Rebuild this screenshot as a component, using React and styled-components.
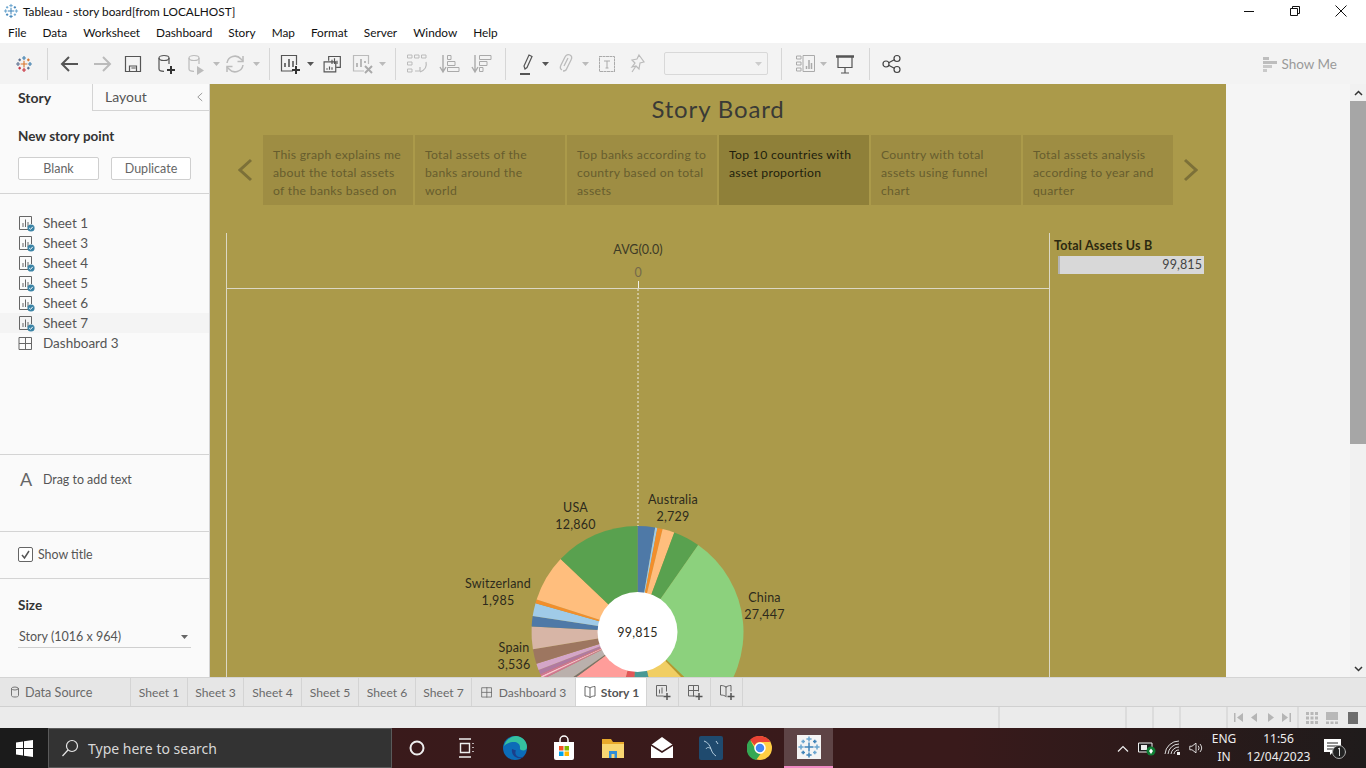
import styled, { createGlobalStyle } from "styled-components";

const GlobalStyle = createGlobalStyle`
  html, body { margin: 0; padding: 0; height: 100%; overflow: hidden; background: #fff; }
  * { box-sizing: border-box; }
`;

const uiFont = `"Noto Sans", "Open Sans", sans-serif`;
const bookFont = `Lato, "Noto Sans", sans-serif`;

const Page = styled.div`
  width: 1366px;
  height: 768px;
  display: flex;
  flex-direction: column;
  overflow: hidden;
  font-family: ${uiFont};
`;

/* title bar + menu */
const TitleBar = styled.div`
  height: 22px;
  display: flex;
  align-items: center;
  padding-left: 3px;
  gap: 4px;
  background: #fff;
  font-family: ${bookFont};
  font-size: 11.8px;
  color: #111;
`;
const WindowControls = styled.div`
  margin-left: auto;
  margin-right: 2px;
  display: flex;
  height: 22px;
`;
const WindowButton = styled.div`
  width: 46px;
  display: flex;
  align-items: center;
  justify-content: center;
`;
const MenuBar = styled.div`
  height: 21px;
  display: flex;
  align-items: center;
  gap: 16px;
  padding-left: 8px;
  background: #fff;
  font-family: ${bookFont};
  font-size: 11.8px;
  color: #111;
`;

/* toolbar */
const Toolbar = styled.div`
  height: 41px;
  display: flex;
  align-items: center;
  background: #f3f3f3;
`;
const Tool = styled.div`
  flex: none;
  width: ${(p) => p.$w || 24}px;
  margin-left: ${(p) => p.$gap || 0}px;
  display: flex;
  align-items: center;
  justify-content: center;
`;
const ToolSep = styled.div`
  flex: none;
  width: 1px;
  height: 32px;
  margin-left: ${(p) => p.$gap || 0}px;
  background: #d6d6d6;
`;
const ToolSelect = styled.div`
  flex: none;
  width: 104px;
  height: 23px;
  margin-left: ${(p) => p.$gap}px;
  border: 1px solid #d8d8d8;
  border-radius: 2px;
  display: flex;
  align-items: center;
  justify-content: flex-end;
  padding-right: 5px;
`;
const ShowMe = styled.div`
  margin-left: auto;
  margin-right: 29px;
  display: flex;
  align-items: center;
  gap: 2px;
  font-family: ${bookFont};
  font-size: 13.5px;
  color: #9a9a9a;
`;

/* main */
const Main = styled.div`
  height: 593px;
  display: flex;
`;
const Sidebar = styled.aside`
  width: 210px;
  flex: none;
  background: #fafafa;
  border-right: 1px solid #d4d4d4;
  display: flex;
  flex-direction: column;
  font-family: ${bookFont};
  font-size: 13px;
  color: #555;
`;
const SideTabs = styled.div`
  height: 27px;
  display: flex;
  font-size: 14px;
`;
const SideTab = styled.div`
  width: ${(p) => (p.$active ? "92px" : "117px")};
  padding: 0 6px 1px ${(p) => (p.$active ? "18px" : "12px")};
  display: flex;
  align-items: center;
  justify-content: space-between;
  font-weight: ${(p) => (p.$active ? 700 : 400)};
  color: ${(p) => (p.$active ? "#333" : "#555")};
  ${(p) =>
    !p.$active &&
    `border-left: 1px solid #d4d4d4; border-bottom: 1px solid #d4d4d4;`}
`;
const SideSection = styled.section`
  height: ${(p) => p.$h}px;
  flex: none;
  padding: ${(p) => p.$pad || "0 18px"};
  border-bottom: ${(p) => (p.$noline ? "none" : "1px solid #d4d4d4")};
`;
const SideHeading = styled.div`
  font-weight: 700;
  font-size: 13.5px;
  line-height: 18px;
  color: #333;
`;
const StoryButtons = styled.div`
  display: flex;
  justify-content: space-between;
  margin-top: 12px;
`;
const StoryButton = styled.div`
  width: ${(p) => p.$w}px;
  height: 23px;
  background: #fff;
  border: 1px solid #cfcfcf;
  border-radius: 2px;
  display: flex;
  align-items: center;
  justify-content: center;
  font-size: 12.5px;
  color: #666;
`;
const SheetList = styled.div`
  padding-top: 19px;
  flex: none;
  height: 261px;
  border-bottom: 1px solid #d4d4d4;
`;
const SheetRow = styled.div`
  height: 20px;
  display: flex;
  align-items: center;
  gap: 7px;
  padding-left: 18px;
  font-size: 13.5px;
  background: ${(p) => (p.$hover ? "#f4f4f4" : "transparent")};
`;
const DragHint = styled.div`
  display: flex;
  align-items: center;
  padding-left: 20px;
  height: 48px;
  font-size: 12.4px;
`;
const BigA = styled.span`
  width: 23px;
  font-size: 18px;
  color: #666;
`;
const TitleCheck = styled.label`
  height: 45px;
  display: flex;
  align-items: center;
  gap: 5px;
  font-size: 12.4px;
`;
const CheckBox = styled.span`
  width: 15px;
  height: 15px;
  border: 1px solid #666;
  border-radius: 2px;
  background: #fff;
  display: flex;
  align-items: center;
  justify-content: center;
`;
const SizeSelect = styled.div`
  margin-top: 12px;
  height: 22px;
  display: flex;
  align-items: center;
  justify-content: space-between;
  padding: 0 3px 0 1px;
  border-bottom: 1px solid #cfcfcf;
  font-size: 12.5px;
`;

/* story canvas */
const Canvas = styled.main`
  width: 1016px;
  flex: none;
  overflow: hidden;
  background: #ab9a4a;
  font-family: ${bookFont};
`;
const StoryTitle = styled.h1`
  margin: 0;
  height: 51px;
  line-height: 49px;
  text-align: center;
  font-size: 24px;
  font-weight: 400;
  letter-spacing: 0.85px;
  color: #3a3a36;
`;
const Navigator = styled.nav`
  height: 70px;
  margin-bottom: 28px;
  display: flex;
  gap: 2px;
`;
const NavArrow = styled.div`
  flex: 1;
  display: flex;
  align-items: center;
  justify-content: ${(p) => (p.$right ? "flex-start" : "flex-end")};
  padding: 0 8px;
`;
const StoryPoint = styled.div`
  width: 150px;
  flex: none;
  padding: 11px 9px 0 10px;
  font-size: 12.2px;
  line-height: 18px;
  letter-spacing: 0.3px;
  overflow: hidden;
  background: ${(p) => (p.$active ? "#8f8039" : "#9e8d43")};
  color: ${(p) => (p.$active ? "#211e0d" : "#675d2e")};
`;
const Viz = styled.div`
  display: flex;
  align-items: flex-start;
  padding-left: 16px;
`;
const ChartPane = styled.div`
  width: 824px;
  height: 444px;
  flex: none;
  border-left: 1px solid #dcd8c4;
  border-right: 1px solid #dcd8c4;
  overflow: hidden;
`;
const AxisHead = styled.div`
  height: 56px;
  border-bottom: 1px solid #dcd8c4;
  display: flex;
  flex-direction: column;
  align-items: center;
  padding-top: 9px;
  font-size: 12.5px;
  line-height: 15px;
  color: #3d3a26;
`;
const AxisValue = styled.div`
  margin-top: 8px;
  height: 16px;
  color: #74694a;
`;
const AxisTick = styled.div`
  width: 1px;
  height: 7px;
  background: #f2f0e6;
`;
const ChartSvg = styled.svg`
  display: block;
  text {
    font-family: ${bookFont};
    font-size: 12.5px;
    fill: #2d2a1c;
    text-anchor: middle;
    letter-spacing: 0.2px;
  }
`;
const LegendBox = styled.div`
  padding: 5px 0 0 4px;
  width: 170px;
`;
const LegendTitle = styled.div`
  font-size: 12.5px;
  font-weight: 700;
  letter-spacing: 0.2px;
  line-height: 16px;
  color: #2b2810;
`;
const LegendBar = styled.div`
  margin: 2px 0 0 4px;
  width: 146px;
  height: 18px;
  background: #d8d8d8;
  border-left: 2px solid #b4b4b4;
  text-align: right;
  padding-right: 2px;
  font-size: 12.5px;
  line-height: 18px;
  letter-spacing: 0.1px;
  color: #444;
`;

const Gutter = styled.div`
  flex: 1;
  background: #f5f5f5;
`;
const Scrollbar = styled.div`
  width: 16px;
  flex: none;
  background: #f1f1f1;
  display: flex;
  flex-direction: column;
  align-items: center;
`;
const ScrollArrow = styled.div`
  height: 17px;
  flex: none;
  display: flex;
  align-items: center;
`;
const ScrollThumb = styled.div`
  width: 16px;
  height: 343px;
  flex: none;
  margin-bottom: auto;
  background: #a6a6a6;
`;

/* sheet tabs and status */
const TabBar = styled.div`
  height: 30px;
  display: flex;
  background: #e6e6e6;
  border-top: 1px solid #d4d4d4;
  border-bottom: 1px solid #d0d0d0;
  font-family: ${bookFont};
  font-size: 12.1px;
  color: #6a6a6a;
`;
const SheetTab = styled.div`
  width: ${(p) => p.$w}px;
  flex: none;
  display: flex;
  align-items: center;
  justify-content: ${(p) => (p.$start ? "flex-start" : "center")};
  padding-left: ${(p) => (p.$start ? "9px" : 0)};
  gap: 4px;
  border-right: 1px solid #d4d4d4;
  background: ${(p) => (p.$active ? "#fff" : "transparent")};
  font-weight: ${(p) => (p.$active ? 700 : 400)};
  font-size: ${(p) => (p.$start ? "12.6px" : "inherit")};
  color: ${(p) => (p.$active ? "#555" : "#6a6a6a")};
`;
const StatusBar = styled.div`
  height: 21px;
  display: flex;
  background: #ebebeb;
`;
const StatusCell = styled.div`
  width: ${(p) => p.$w}px;
  flex: none;
  display: flex;
  align-items: center;
  justify-content: space-around;
  padding: 0 3px;
  border-right: ${(p) => (p.$last ? "none" : "2px solid #dcdcdc")};
`;

/* windows taskbar */
const Taskbar = styled.div`
  height: 40px;
  flex: none;
  display: flex;
  align-items: center;
  background: linear-gradient(90deg, #3a1a1b 0%, #391a1b 70%, #2c1a1a 85%, #1f1b1b 100%);
  color: #eee;
`;
const StartButton = styled.div`
  width: 48px;
  height: 40px;
  flex: none;
  background: #1b1b1b;
  display: flex;
  align-items: center;
  justify-content: center;
`;
const SearchBox = styled.div`
  width: 344px;
  height: 40px;
  flex: none;
  background: #333;
  border: 1px solid #5a5a5a;
  display: flex;
  align-items: center;
  gap: 9px;
  padding-left: 12px;
  font-size: 14px;
  color: #d8d8d8;
`;
const TaskSlot = styled.div`
  width: 49px;
  height: 40px;
  flex: none;
  display: flex;
  align-items: center;
  justify-content: center;
  background: ${(p) => (p.$active ? "#5e4446" : "transparent")};
  border-bottom: ${(p) => (p.$active ? "2px solid #f08ac4" : "none")};
`;
const AppTile = styled.div`
  width: 24px;
  height: 24px;
  background: #f4f4f4;
  display: flex;
`;
const Tray = styled.div`
  margin-left: auto;
  display: flex;
  align-items: center;
  height: 40px;
`;
const TrayIcon = styled.div`
  width: ${(p) => p.$w}px;
  flex: none;
  display: flex;
  align-items: center;
  justify-content: center;
`;
const TrayText = styled.div`
  width: ${(p) => p.$w}px;
  flex: none;
  text-align: center;
  font-size: 12px;
  line-height: 18px;
  color: #eee;
`;

/* icons */
const Svg = ({ size = 24, w, h, box, children, ...rest }) => (
  <svg
    width={w || size}
    height={h || size}
    viewBox={box || "0 0 24 24"}
    fill="none"
    strokeLinecap="square"
    {...rest}
  >
    {children}
  </svg>
);

const TableauMark = ({ size = 20, colors }) => {
  const [a, b, c, d] = colors;
  const crosses = [
    [12, 12, 4.5, a], [12, 4, 2.6, b], [12, 20, 2.6, c], [4, 12, 2.6, d], [20, 12, 2.6, b],
    [6.2, 6.5, 1.8, d], [17.8, 6.5, 1.8, a], [6.2, 17.5, 1.8, c], [17.8, 17.5, 1.8, d],
  ];
  return (
    <Svg size={size}>
      {crosses.map(([x, y, s, col], i) => (
        <path key={i} d={`M${x - s} ${y}H${x + s}M${x} ${y - s}V${y + s}`} stroke={col} strokeWidth="1.5" strokeLinecap="butt" />
      ))}
    </Svg>
  );
};

const Caret = ({ color = "#777", w = 7 }) => (
  <svg width={w} height="4" viewBox="0 0 7 4"><path d="M0 0h7L3.500 4z" fill={color} /></svg>
);

const BackIcon = ({ color }) => (
  <Svg><path d="M20 12H4M11 5l-7 7 7 7" stroke={color} strokeWidth="2" strokeLinecap="butt" /></Svg>
);
const ForwardIcon = ({ color }) => (
  <Svg><path d="M4 12h16M13 5l7 7-7 7" stroke={color} strokeWidth="2" strokeLinecap="butt" /></Svg>
);
const SaveIcon = () => (
  <Svg><path d="M4.500 4.500h15v15h-15zM8.500 19v-5h7v5M11 16h3" stroke="#555" strokeWidth="1.200" /></Svg>
);
const DataIcon = ({ color = "#555", plus, play }) => (
  <Svg>
    <ellipse cx="10" cy="6" rx="5" ry="2.500" stroke={color} strokeWidth="1.200" />
    <path d="M5 6v11c0 1.300 2 2.300 5 2.300M15 6v6" stroke={color} strokeWidth="1.200" strokeLinecap="butt" />
    {plus && <path d="M17 14v8M13 18h8" stroke="#333" strokeWidth="2" strokeLinecap="butt" />}
    {play && <path d="M13 14l7 4.500-7 4.500z" fill={color} />}
  </Svg>
);
const RefreshIcon = () => (
  <Svg>
    <path d="M4 11a8 8 0 0 1 14-4l2 2M20 13a8 8 0 0 1-14 4l-2-2" stroke="#bbb" strokeWidth="1.500" strokeLinecap="butt" />
    <path d="M20 4v5.500h-5.500M4 20v-5.500h5.500" stroke="#bbb" strokeWidth="1.500" strokeLinecap="butt" />
  </Svg>
);
const SheetAddIcon = () => (
  <Svg>
    <path d="M15 19H3.500V3.500h15V13" stroke="#555" strokeWidth="1.200" strokeLinecap="butt" />
    <path d="M7 15v-4M11 15V7M15 15v-6" stroke="#555" strokeWidth="1.600" strokeLinecap="butt" />
    <path d="M18 14v8M14 18h8" stroke="#333" strokeWidth="2" strokeLinecap="butt" />
  </Svg>
);
const DuplicateIcon = () => (
  <Svg size={20}>
    <path d="M8 8V3h14v13h-5" stroke="#555" strokeWidth="1.400" strokeLinecap="butt" />
    <path d="M2.500 9.500h14v12h-14z" stroke="#555" strokeWidth="1.400" fill="#f3f3f3" />
    <path d="M12 12V7M15 12V5M18 12V8M6 19v-2M9 19v-4M12 19v-3" stroke="#555" strokeWidth="1.400" strokeLinecap="butt" />
  </Svg>
);
const ClearIcon = () => (
  <Svg>
    <path d="M14 19H3.500V3.500h15V12" stroke="#bbb" strokeWidth="1.200" strokeLinecap="butt" />
    <path d="M7 15v-4M11 15V7M15 11V9" stroke="#aaa" strokeWidth="1.600" strokeLinecap="butt" />
    <path d="M15 14l7 7M22 14l-7 7" stroke="#aaa" strokeWidth="2" strokeLinecap="butt" />
  </Svg>
);
const SwapIcon = () => (
  <Svg>
    <path d="M3 3h4v3H3zM10 3h4v3h-4zM17 3h4v3h-4zM3 10h4v3H3zM3 17h4v3H3z" stroke="#bbb" strokeWidth="1" />
    <path d="M21 10c1 4-1 8-6 10M10 19h5v-4" stroke="#bbb" strokeWidth="1.200" strokeLinecap="butt" />
  </Svg>
);
const SortIcon = ({ desc }) => (
  <Svg>
    <path d="M5 3v16M2 15l3 5 3-5" stroke="#aaa" strokeWidth="1.400" strokeLinecap="butt" />
    {(desc
      ? ["M10 3.500h11v4H10z", "M10 9.500h7v4h-7z", "M10 15.500h3v4h-3z"]
      : ["M10 3.500h3v4h-3z", "M10 9.500h7v4h-7z", "M10 15.500h11v4H10z"]
    ).map((d) => (
      <path key={d} d={d} stroke="#aaa" strokeWidth="1" />
    ))}
  </Svg>
);
const HighlightIcon = () => (
  <Svg>
    <path d="M9 17l-1-3L13 3l3 1.500-5 11z" stroke="#555" strokeWidth="1.200" strokeLinecap="butt" />
    <path d="M4 22h10" stroke="#555" strokeWidth="2" strokeLinecap="butt" />
  </Svg>
);
const AttachIcon = () => (
  <Svg>
    <path d="M8 18c-2-1-2-3-1-5l4-8c1-2 3-3 5-2s2 3 1 5l-5 10c-1 1-2 1-3 1M10 14l4-8" stroke="#bbb" strokeWidth="1.300" strokeLinecap="butt" />
  </Svg>
);
const TextBoxIcon = () => (
  <Svg>
    <path d="M4.500 4.500h15v15h-15z" stroke="#aaa" strokeWidth="1" strokeDasharray="2 1.500" />
    <path d="M9 9h6M12 9v7M10.500 16h3" stroke="#aaa" strokeWidth="1" strokeLinecap="butt" />
  </Svg>
);
const PinIcon = () => (
  <Svg>
    <path d="M14 3l5 7-4 1-1 6-3-3-4 1 3-4-3-3 5-1z M7 20l4-6" stroke="#bbb" strokeWidth="1.200" strokeLinecap="butt" />
  </Svg>
);
const LabelsIcon = () => (
  <Svg>
    <path d="M3 4h4v3H3zM3 10h4v3H3zM3 16h4v3H3zM9.500 3.500h11v16h-11z" stroke="#aaa" strokeWidth="1" />
    <path d="M12.500 17v-3M15 17V8M17.500 17v-6" stroke="#aaa" strokeWidth="1.500" strokeLinecap="butt" />
  </Svg>
);
const PresentIcon = () => (
  <Svg>
    <path d="M3 4.500h18" stroke="#555" strokeWidth="2.500" strokeLinecap="butt" />
    <path d="M5 5v10.500h14V5M12 16v5M8 21h8" stroke="#555" strokeWidth="1.200" strokeLinecap="butt" />
  </Svg>
);
const ShareIcon = () => (
  <Svg>
    <circle cx="6" cy="12" r="3" stroke="#444" strokeWidth="1.200" />
    <circle cx="17" cy="6.500" r="3" stroke="#444" strokeWidth="1.200" />
    <circle cx="17" cy="17.500" r="3" stroke="#444" strokeWidth="1.200" />
    <path d="M8.700 10.700l5.600-2.900M8.700 13.300l5.600 2.900" stroke="#444" strokeWidth="1.200" strokeLinecap="butt" />
  </Svg>
);
const ShowMeIcon = () => (
  <Svg size={18} box="0 0 18 18">
    <path d="M2 2h6v3H2z" fill="#bdbdbd" />
    <path d="M2 6h14v3H2z" fill="#bdbdbd" />
    <path d="M2 10h9v3H2zM2 14h4v3H2z" fill="#c9c9c9" />
  </Svg>
);
const Chevron = ({ right, w = 15, h = 24, color = "#7c7038", sw = 3 }) => (
  <svg width={w} height={h} viewBox="0 0 15 24" fill="none">
    <path d={right ? "M2 2l11 10L2 22" : "M13 2L2 12l11 10"} stroke={color} strokeWidth={sw} />
  </svg>
);

const SheetIcon = () => (
  <Svg size={18} box="0 -1 18 18">
    <path d="M11 14.500H1.500V1.500h12V9" stroke="#666" strokeWidth="1" strokeLinecap="butt" />
    <path d="M5 12V8M7.500 12V4.500M10 12V7" stroke="#666" strokeWidth="1" strokeLinecap="butt" />
    <circle cx="13" cy="13" r="3.600" fill="#3b83a5" />
    <path d="M11.200 13l1.300 1.300 2.300-2.500" stroke="#fff" strokeWidth="1" strokeLinecap="butt" />
  </Svg>
);
const GridIcon = ({ size = 18 }) => (
  <Svg size={size} box="0 -1 18 18">
    <path d="M1.500 2.500h12v12h-12zM7.500 2.500v12M1.500 8.500h12" stroke="#666" strokeWidth="1" />
  </Svg>
);
const BookIcon = () => (
  <Svg size={14} box="0 0 14 14">
    <path d="M7 3c-1.500-1-3-1.500-5-1.500v9.500c2 0 3.500.5 5 1.500 1.500-1 3-1.500 5-1.500V1.500C10 1.500 8.500 2 7 3zM7 3v9.500" stroke="#666" strokeWidth="1" strokeLinecap="butt" />
  </Svg>
);
const PlusBadge = ({ children }) => (
  <Svg size={18} box="0 0 18 18">
    {children}
    <path d="M13 10v7M9.500 13.500h7" stroke="#555" strokeWidth="1.500" strokeLinecap="butt" />
  </Svg>
);

/* donut */
const SLICES = [
  [0, 9.6, "#4e79a7"], [9.6, 10.8, "#a0cbe8"], [10.8, 13.7, "#f28e2b"], [13.7, 20.3, "#ffbe7d"],
  [20.3, 34.9, "#59a14f"], [34.9, 134, "#8cd17d"], [134, 136, "#b6992d"], [136, 166.4, "#f1ce63"],
  [166.4, 184, "#499894"], [184, 194.5, "#e15759"], [194.5, 233.6, "#ff9d9a"], [233.6, 235, "#79706e"],
  [235, 243.5, "#bab0ac"], [243.5, 244.5, "#d37295"], [244.5, 245.5, "#fabfd2"], [245.5, 246.5, "#d37295"],
  [246.500, 249, "#b07aa1"], [249, 252.5, "#d4a6c8"], [252.5, 260.6, "#9d7660"], [260.6, 273, "#d7b5a6"],
  [273, 278.7, "#4e79a7"], [278.7, 285.8, "#a0cbe8"], [285.8, 287.9, "#f28e2b"], [287.9, 313.5, "#ffbe7d"],
  [313.5, 360, "#59a14f"],
];
const CX = 637.5;
const CY = 632;
const R = 106;

const polar = (deg, r) => {
  const a = (deg * Math.PI) / 180;
  return [CX + r * Math.sin(a), CY - r * Math.cos(a)];
};
const wedge = (from, to) => {
  const [x1, y1] = polar(from, R);
  const [x2, y2] = polar(to, R);
  return `M${CX} ${CY}L${x1} ${y1}A${R} ${R} 0 ${to - from > 180 ? 1 : 0} 1 ${x2} ${y2}Z`;
};

const LABELS = [
  ["Australia", "2,729", 673, 499],
  ["USA", "12,860", 575.5, 507],
  ["China", "27,447", 764.5, 597],
  ["Switzerland", "1,985", 498, 583],
  ["Spain", "3,536", 514, 647],
];

const Donut = () => (
  <ChartSvg width="822" height="388" viewBox="227 289 822 388">
    <path d={`M638 289V${CY - R}`} stroke="#efece0" strokeWidth="1" strokeDasharray="2 2" />
    {SLICES.map(([from, to, color]) => (
      <path key={from} d={wedge(from, to)} fill={color} />
    ))}
    <circle cx={CX} cy={CY} r="40" fill="#fff" />
    <text x={CX} y={CY + 5}>99,815</text>
    {LABELS.map(([name, value, x, y]) => (
      <g key={name}>
        <text x={x} y={y + 5}>{name}</text>
        <text x={x} y={y + 22}>{value}</text>
      </g>
    ))}
  </ChartSvg>
);

/* taskbar pictures */
const WinLogo = () => (
  <Svg size={17} box="0 0 17 17">
    <path d="M0 2.400L7 1.400V8H0zM8 1.300L17 0v8H8zM0 9h7v6.600L0 14.600zM8 9h9v8l-9-1.300z" fill="#fff" />
  </Svg>
);
const EdgeLogo = () => (
  <Svg size={26} box="0 0 26 26">
    <circle cx="13" cy="13" r="12" fill="#0c6cb8" />
    <path d="M2 11C4 4 10 1 14 1c6 0 11 5 11 11 0 3-3 4-6 3-1.500-.5-1-2-1-3 0-3-3-5-6-5-5 0-8 2-10 4z" fill="#35c1a0" />
    <path d="M10 14c-1 5 3 10 9 9 1 0 2-.5 3-1.500-7 3-10-3-8-6z" fill="#1b3f8b" />
  </Svg>
);
const StoreLogo = () => (
  <Svg size={26} box="0 0 26 26">
    <path d="M9 7V5a4 4 0 0 1 8 0v2" stroke="#fff" strokeWidth="1.500" />
    <path d="M3 7h20v16a2 2 0 0 1-2 2H5a2 2 0 0 1-2-2z" fill="#fff" />
    <path d="M8 11h4.500v4.500H8z" fill="#f25022" />
    <path d="M13.500 11H18v4.500h-4.500z" fill="#7fba00" />
    <path d="M8 16.500h4.500V21H8z" fill="#00a4ef" />
    <path d="M13.500 16.500H18V21h-4.500z" fill="#ffb900" />
  </Svg>
);
const FolderLogo = () => (
  <Svg size={26} box="0 0 26 26">
    <path d="M2 4h9l2 3h11v16H2z" fill="#e8a92b" />
    <path d="M2 9h22v14H2z" fill="#f8d671" />
    <path d="M9 16h8v7H9z" fill="#2f8dd8" />
    <path d="M11.500 19h3v4h-3z" fill="#f8d671" />
  </Svg>
);
const MailLogo = () => (
  <Svg size={26} box="0 0 26 26">
    <path d="M2 10l11-8 11 8v13H2z" fill="#fff" />
    <path d="M2 10l11 7 11-7" stroke="#3a1a1b" strokeWidth="1.500" />
  </Svg>
);
const MysqlLogo = () => (
  <Svg size={26} box="0 0 26 26">
    <rect x="1" y="1" width="24" height="24" rx="2" fill="#1f4a6e" />
    <path d="M6 6c4 1 6 5 7 8s2 5 5 7M8 14c1-2 3-2 5 0M18 6l2 3" stroke="#b7cfe0" strokeWidth="1" fill="none" strokeLinecap="butt" />
  </Svg>
);
const ChromeLogo = () => (
  <Svg size={26} box="0 0 26 26">
    <circle cx="13" cy="13" r="12" fill="#ffce44" />
    <path d="M13 1a12 12 0 0 1 10.400 6H13a6 6 0 0 0-5.400 3.400L3 4.800A12 12 0 0 1 13 1z" fill="#ea4335" />
    <path d="M3 4.800l5 8.600a6 6 0 0 0 5.500 5.600L9 25a12 12 0 0 1-6-20.200z" fill="#34a853" />
    <circle cx="13" cy="13" r="5" fill="#4285f4" stroke="#fff" strokeWidth="1.500" />
  </Svg>
);
const TaskViewIcon = () => (
  <Svg size={20} box="0 0 20 20">
    <path d="M3 1h12M3 19h12M4.500 5.500h9v9h-9zM17 5v1M17 9v1M17 13v1" stroke="#eee" strokeWidth="1.400" strokeLinecap="butt" />
  </Svg>
);

const Pager = ({ d }) => (
  <svg width="9" height="9" viewBox="0 0 9 9"><path d={d} fill="#b5b5b5" /></svg>
);

const TABS = ["Sheet 1", "Sheet 3", "Sheet 4", "Sheet 5", "Sheet 6", "Sheet 7"];
const TAB_W = [57, 56, 58, 57, 57, 56];
const POINTS = [
  "This graph explains me about the total assets of the banks based on",
  "Total assets of the banks around the world",
  "Top banks according to country based on total assets",
  "Top 10 countries with asset proportion",
  "Country with total assets using funnel chart",
  "Total assets analysis according to year and quarter",
];
const MENU = ["File", "Data", "Worksheet", "Dashboard", "Story", "Map", "Format", "Server", "Window", "Help"];

export default function App() {
  return (
    <Page>
      <GlobalStyle />
      <TitleBar>
        <TableauMark size={16} colors={["#3f83b8", "#6aa5cf", "#3f83b8", "#6aa5cf"]} />
        Tableau - story board[from LOCALHOST]
        <WindowControls>
          <WindowButton>
            <svg width="10" height="10"><path d="M0 5.500h10" stroke="#111" /></svg>
          </WindowButton>
          <WindowButton>
            <svg width="10" height="10" fill="none"><path d="M.5 2.500h7v7h-7zM2.500 2.500v-2h7v7h-2" stroke="#111" /></svg>
          </WindowButton>
          <WindowButton>
            <svg width="12" height="12"><path d="M.5.5l11 11M11.500.5l-11 11" stroke="#111" /></svg>
          </WindowButton>
        </WindowControls>
      </TitleBar>
      <MenuBar>
        {MENU.map((m) => (
          <span key={m}>{m}</span>
        ))}
      </MenuBar>

      <Toolbar>
        <Tool $w={47}><TableauMark size={18} colors={["#d9762c", "#3f7fae", "#c8323f", "#5b6f8f"]} /></Tool>
        <ToolSep />
        <Tool $gap={10}><BackIcon color="#555" /></Tool>
        <Tool $gap={8}><ForwardIcon color="#bbb" /></Tool>
        <Tool $gap={7}><SaveIcon /></Tool>
        <Tool $gap={9}><DataIcon plus /></Tool>
        <Tool $gap={6}><DataIcon color="#bbb" play /></Tool>
        <Tool $gap={3} $w={10}><Caret color="#bbb" /></Tool>
        <Tool $gap={2}><RefreshIcon /></Tool>
        <Tool $gap={4} $w={10}><Caret color="#bbb" /></Tool>
        <ToolSep $gap={8} />
        <Tool $gap={8}><SheetAddIcon /></Tool>
        <Tool $gap={3} $w={10}><Caret color="#555" /></Tool>
        <Tool $gap={5}><DuplicateIcon /></Tool>
        <Tool $gap={6}><ClearIcon /></Tool>
        <Tool $gap={3} $w={10}><Caret color="#bbb" /></Tool>
        <ToolSep $gap={8} />
        <Tool $gap={9}><SwapIcon /></Tool>
        <Tool $gap={9}><SortIcon /></Tool>
        <Tool $gap={8}><SortIcon desc /></Tool>
        <ToolSep $gap={11} />
        <Tool $gap={10}><HighlightIcon /></Tool>
        <Tool $w={10}><Caret color="#555" /></Tool>
        <Tool $gap={4}><AttachIcon /></Tool>
        <Tool $gap={2} $w={10}><Caret color="#bbb" /></Tool>
        <Tool $gap={5}><TextBoxIcon /></Tool>
        <Tool $gap={6}><PinIcon /></Tool>
        <ToolSelect $gap={15}><Caret color="#ccc" /></ToolSelect>
        <ToolSep $gap={13} />
        <Tool $gap={12}><LabelsIcon /></Tool>
        <Tool $w={10}><Caret color="#bbb" /></Tool>
        <Tool $gap={5}><PresentIcon /></Tool>
        <ToolSep $gap={12} />
        <Tool $gap={10}><ShareIcon /></Tool>
        <ShowMe><ShowMeIcon />Show Me</ShowMe>
      </Toolbar>

      <Main>
        <Sidebar>
          <SideTabs>
            <SideTab $active>Story</SideTab>
            <SideTab>
              Layout
              <Chevron w={6} h={10} color="#666" sw={1.6} />
            </SideTab>
          </SideTabs>
          <SideSection $h={83} $pad="16px 18px 0">
            <SideHeading>New story point</SideHeading>
            <StoryButtons>
              <StoryButton $w={81}>Blank</StoryButton>
              <StoryButton $w={80}>Duplicate</StoryButton>
            </StoryButtons>
          </SideSection>
          <SheetList>
            {TABS.map((s) => (
              <SheetRow key={s} $hover={s === "Sheet 7"}><SheetIcon />{s}</SheetRow>
            ))}
            <SheetRow><GridIcon />Dashboard 3</SheetRow>
          </SheetList>
          <SideSection $h={77} $pad="0">
            <DragHint><BigA>A</BigA>Drag to add text</DragHint>
          </SideSection>
          <SideSection $h={47}>
            <TitleCheck>
              <CheckBox>
                <svg width="11" height="11" fill="none"><path d="M2 6l2.500 3L9 2" stroke="#555" strokeWidth="1.500" /></svg>
              </CheckBox>
              Show title
            </TitleCheck>
          </SideSection>
          <SideSection $h={98} $pad="17px 18px 0" $noline>
            <SideHeading>Size</SideHeading>
            <SizeSelect>
              Story (1016 x 964)
              <Caret color="#666" />
            </SizeSelect>
          </SideSection>
        </Sidebar>

        <Canvas>
          <StoryTitle>Story Board</StoryTitle>
          <Navigator>
            <NavArrow><Chevron /></NavArrow>
            {POINTS.map((p, i) => (
              <StoryPoint key={p} $active={i === 3}>{p}</StoryPoint>
            ))}
            <NavArrow $right><Chevron right /></NavArrow>
          </Navigator>
          <Viz>
            <ChartPane>
              <AxisHead>
                AVG(0.0)
                <AxisValue>0</AxisValue>
                <AxisTick />
              </AxisHead>
              <Donut />
            </ChartPane>
            <LegendBox>
              <LegendTitle>Total Assets Us B</LegendTitle>
              <LegendBar>99,815</LegendBar>
            </LegendBox>
          </Viz>
        </Canvas>

        <Gutter />
        <Scrollbar>
          <ScrollArrow>
            <svg width="9" height="6" fill="none"><path d="M1 5l3.500-3.500L8 5" stroke="#333" strokeWidth="1.500" /></svg>
          </ScrollArrow>
          <ScrollThumb />
          <ScrollArrow>
            <svg width="9" height="6" fill="none"><path d="M1 1l3.500 3.500L8 1" stroke="#333" strokeWidth="1.500" /></svg>
          </ScrollArrow>
        </Scrollbar>
      </Main>

      <TabBar>
        <SheetTab $w={131} $start>
          <Svg size={12} box="0 0 12 12">
            <ellipse cx="6" cy="2.500" rx="3.500" ry="1.500" stroke="#777" />
            <path d="M2.500 2.500v7c0 1 1.500 1.500 3.500 1.500s3.500-.5 3.500-1.500v-7" stroke="#777" />
          </Svg>
          Data Source
        </SheetTab>
        {TABS.map((t, i) => (
          <SheetTab key={t} $w={TAB_W[i]}>{t}</SheetTab>
        ))}
        <SheetTab $w={104}><GridIcon size={14} />Dashboard 3</SheetTab>
        <SheetTab $w={71} $active><BookIcon />Story 1</SheetTab>
        <SheetTab $w={32}>
          <PlusBadge>
            <path d="M9 13H2.500V2.500h10V8" stroke="#666" />
            <path d="M5.500 10V7M8 10V5" stroke="#666" />
          </PlusBadge>
        </SheetTab>
        <SheetTab $w={32}>
          <PlusBadge>
            <path d="M9 13H2.500V2.500h10V8M7.500 2.500V13M2.500 7.500h10" stroke="#666" />
          </PlusBadge>
        </SheetTab>
        <SheetTab $w={32}>
          <PlusBadge>
            <path d="M8 4C6.500 3 5 2.500 2.500 2.500v9.500c2.500 0 4 .5 5.500 1.500M8 4c1.500-1 3-1.500 5-1.500V8M8 4v9" stroke="#666" />
          </PlusBadge>
        </SheetTab>
      </TabBar>

      <StatusBar>
        <StatusCell $w={1000} />
        <StatusCell $w={127} />
        <StatusCell $w={27} />
        <StatusCell $w={27} />
        <StatusCell $w={47} />
        <StatusCell $w={71}>
          <Pager d="M0 0h1.500v9H0zM9 0v9L3 4.500z" />
          <Pager d="M7 0v9L1 4.500z" />
          <Pager d="M2 0v9l6-4.500z" />
          <Pager d="M9 0H7.500v9H9zM0 0v9l6-4.500z" />
        </StatusCell>
        <StatusCell $w={67} $last>
          <Svg size={12} box="0 0 12 12">
            <path d="M0 0h3v3H0zM4.500 0h3v3h-3zM9 0h3v3H9zM0 4.500h3v3H0zM4.500 4.500h3v3h-3zM9 4.500h3v3H9zM0 9h3v3H0zM4.500 9h3v3h-3zM9 9h3v3H9z" fill="#b8b8b8" />
          </Svg>
          <Svg size={12} box="0 0 12 12">
            <path d="M0 0h12v8H0zM0 9.500h3V12H0zM4.500 9.500h3V12h-3zM9 9.500h3V12H9z" fill="#b8b8b8" />
          </Svg>
          <Svg size={12} box="0 0 12 12">
            <path d="M1 0h10v12H1z" fill="#6d6d6d" />
          </Svg>
        </StatusCell>
      </StatusBar>

      <Taskbar>
        <StartButton><WinLogo /></StartButton>
        <SearchBox>
          <Svg size={18} box="0 0 18 18">
            <circle cx="11" cy="7" r="5.500" stroke="#e8e8e8" strokeWidth="1.200" />
            <path d="M7 11l-5.500 6" stroke="#e8e8e8" strokeWidth="1.200" strokeLinecap="butt" />
          </Svg>
          Type here to search
        </SearchBox>
        <TaskSlot>
          <Svg size={18} box="0 0 18 18"><circle cx="9" cy="9" r="6.500" stroke="#eee" strokeWidth="2" /></Svg>
        </TaskSlot>
        <TaskSlot><TaskViewIcon /></TaskSlot>
        <TaskSlot><EdgeLogo /></TaskSlot>
        <TaskSlot><StoreLogo /></TaskSlot>
        <TaskSlot><FolderLogo /></TaskSlot>
        <TaskSlot><MailLogo /></TaskSlot>
        <TaskSlot><MysqlLogo /></TaskSlot>
        <TaskSlot><ChromeLogo /></TaskSlot>
        <TaskSlot $active>
          <AppTile>
            <TableauMark size={24} colors={["#3f83b8", "#6aa5cf", "#3f83b8", "#6aa5cf"]} />
          </AppTile>
        </TaskSlot>
        <Tray>
          <TrayIcon $w={26}>
            <svg width="12" height="7" fill="none"><path d="M1 6.500l5-5 5 5" stroke="#eee" strokeWidth="1.200" /></svg>
          </TrayIcon>
          <TrayIcon $w={22}>
            <Svg size={18} box="0 0 18 18">
              <path d="M1 4h13v9H1z" fill="#1d1d1d" stroke="#eee" />
              <path d="M3 6h6v5H3z" fill="#eee" />
              <circle cx="13" cy="12" r="4.500" fill="#0e7d33" />
              <path d="M13 9.500l2 2.500-2 3-2-3z" fill="#fff" />
            </Svg>
          </TrayIcon>
          <TrayIcon $w={30}>
            <Svg size={18} box="0 0 18 18">
              <path d="M1 15a14 14 0 0 1 14-13M4 15A11 11 0 0 1 15 5M7 15a8 8 0 0 1 8-7M10 15a5 5 0 0 1 5-4" stroke="#ddd" strokeWidth="1" strokeLinecap="butt" />
              <path d="M13 13h3v3h-3z" fill="#eee" />
            </Svg>
          </TrayIcon>
          <TrayIcon $w={16}>
            <Svg size={18} box="0 0 18 18">
              <path d="M2 7v4h2.500L9 14.500v-11L4.500 7z" stroke="#eee" strokeLinecap="butt" />
              <path d="M11.500 6.500a4 4 0 0 1 0 5M13.500 4.500a7 7 0 0 1 0 9" stroke="#eee" strokeLinecap="butt" />
            </Svg>
          </TrayIcon>
          <TrayText $w={40}>ENG<br />IN</TrayText>
          <TrayText $w={69}>11:56<br />12/04/2023</TrayText>
          <TrayIcon $w={42}>
            <Svg size={24} box="0 0 24 24">
              <path d="M2 3h17v13h-8l-3 3v-3H2z" fill="#fff" />
              <path d="M5 7h11M5 10h11M5 13h7" stroke="#222" strokeLinecap="butt" />
              <circle cx="17" cy="16" r="6.500" fill="#222" stroke="#aaa" />
              <path d="M16 13l1.500-1v8" stroke="#ddd" strokeLinecap="butt" />
            </Svg>
          </TrayIcon>
          <TrayIcon $w={11} />
        </Tray>
      </Taskbar>
    </Page>
  );
}
